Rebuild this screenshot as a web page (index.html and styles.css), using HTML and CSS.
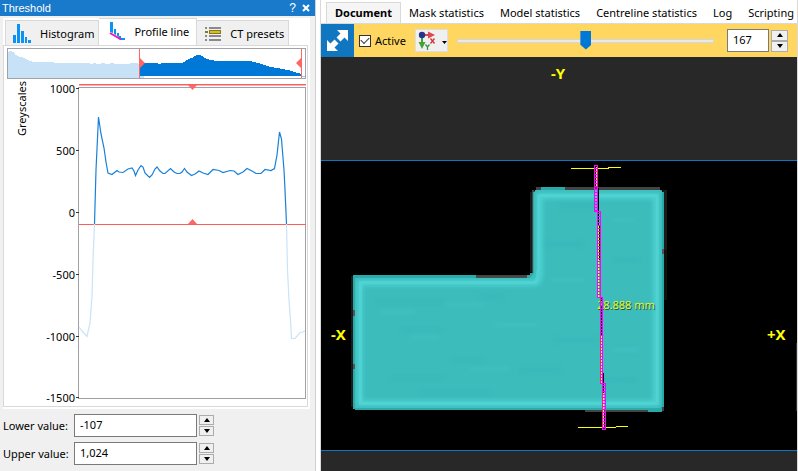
FILE: index.html
```html
<!DOCTYPE html>
<html lang="en">
<head>
<meta charset="utf-8">
<title>Threshold</title>
<link rel="stylesheet" href="styles.css">
</head>
<body>
<aside class="dock">
  <header class="titlebar">
    <h1 class="title">Threshold</h1>
    <button class="title-btn" aria-label="Help">?</button>
    <button class="title-btn" aria-label="Close">
      <svg width="8" height="8" viewBox="0 0 8 8"><path d="M1 1L7 7M7 1L1 7" stroke="#fff" stroke-width="2"/></svg>
    </button>
  </header>

  <div class="dock-body">
    <div class="tabs" role="tablist">
      <button class="tab" role="tab">
        <svg width="20" height="20" viewBox="0 0 20 20"><path fill="#0a93f5" d="M0 11h3v8H0zM4 0h3v19H4zM8 7h3v12H8zM12 13h2v6h-2zM15 16h3v3h-3z"/></svg>
        Histogram
      </button>
      <button class="tab tab-active" role="tab" aria-selected="true">
        <svg width="20" height="20" viewBox="0 0 20 20"><path fill="#0a93f5" d="M3 0h3v11l-3-1zM7 7h2v6l-2-1zM10 11h2v4l-2-1zM12 14h2v4l-2-1zM14 16h4v2h-4z"/><path d="M3 11l11 6.500" stroke="#f413b8" stroke-width="2"/></svg>
        Profile line
      </button>
      <button class="tab" role="tab">
        <svg width="18" height="16" viewBox="0 0 18 16"><path fill="#8a8a8a" d="M0 1h2v2H0zM0 9h2v2H0zM0 13h2v2H0zM4 1h12v2H4zM4 9h12v2H4zM4 13h12v2H4z"/><path fill="#897817" d="M0 5h3v2H0zM4 4h12v4H4z"/><path fill="#d5bd2c" d="M5 5h10v2H5z"/></svg>
        CT presets
      </button>
    </div>

    <div class="pane">
      <svg class="plots" viewBox="4 46 303 360" role="img" aria-label="Profile line of greyscales">
        <g shape-rendering="crispEdges">
          <rect x="7.500" y="48.500" width="298" height="30" fill="#fff" stroke="#9fa3a9"/>
          <path fill="#c7e2f7" d="M8 52h1v-1h3v1h2v1h1v2h2v1h2v1h4v1h2v1h2v1h2v1h3v1h22v1h36v1h3v-1h3v1h5v-1h4v1h5v-1h4v1h16v-1h8v1h6v14H8z"/>
          <path fill="#0078d7" d="M139 64h5v-1h14v1h3v-1h22v-1h2v-1h1v-1h2v-1h2v-1h3v-1h1v-1h2v-1h5v1h2v1h1v1h2v1h3v1h5v1h38v1h4v1h4v1h3v1h3v1h3v1h5v1h6v1h5v1h5v1h3v1h3v1h4v1h2v2H139z"/>
          <path fill="#8fc5ee" d="M301 76h4v1h-4z"/>
          <path d="M139.500 49v29M301.500 49v29" fill="none" stroke="#ff6565"/>
        </g>
        <path fill="#ff6565" d="M140 58l5 5-5 5zM301 58l-5 5 5 5z"/>

        <g shape-rendering="crispEdges" fill="none">
          <path d="M78.500 87.500h227v311h-227z" stroke="#a0a0a5"/>
          <path d="M76 88.500h3M76 150.500h3M76 212.500h3M76 274.500h3M76 336.500h3M76 397.500h3" stroke="#333"/>
          <path d="M79 84.500h227M79 224.500h227" stroke="#ff5c5c"/>
          <path d="M79 85.500h227" stroke="#ffb4b4"/>
        </g>
        <path fill="#ff6565" d="M188 85h9l-4.500 5zM188 224h9l-4.500-5z"/>
        <g fill="none" stroke="#c9e3f7" stroke-width="1.200">
          <path d="M79 327L82 331 87 336.500 90 323 92 296 93 260 94.500 224"/>
          <path d="M286.500 224L287.500 270 289 300 290.500 320 291.500 338.500H295L300 332.500 303 332 305 331"/>
        </g>
        <path fill="none" stroke="#1880d8" stroke-width="1.200" d="M94.500 224L96 170 98.500 117 101 134 104 148 106 162 108 173 112 174.500 117 170.500 119 172 123 172.500 128 169 132 168 134 171 135.500 175.500 138 170 141 165.500 143 167 145 173 149.500 177.500 152 175 155 169 157 167 160 171 163 173.500H165L170.500 168.500 174 172 177 173.500H180L182 172 184.500 168.500 187 172 191.500 175.500 195 174 199 171 203 173 208 174.500 213 169.500 219 170.500 223 172.500 230 170.500 234 171 238 174.500 243 172 247 168.500 252 171 256 173.500H261L265 169.500 271 170.500 274.500 168.500 277 155 279.500 132 281.500 139 284 170 285 190 286.500 224"/>
        <g class="axis" text-anchor="end">
          <text x="75" y="93">1000</text>
          <text x="75" y="155">500</text>
          <text x="75" y="217">0</text>
          <text x="75" y="279">-500</text>
          <text x="75" y="341">-1000</text>
          <text x="75" y="402">-1500</text>
        </g>
        <text class="axis" transform="translate(26 136) rotate(-90)">Greyscales</text>
      </svg>
    </div>
  </div>

  <form class="values">
    <label for="lower">Lower value:</label>
    <input class="field" id="lower" type="text" value="-107">
    <span class="spin">
      <button type="button" aria-label="Increase lower value"><svg width="6" height="4" viewBox="0 0 6 4"><path d="M0 4h6L3 0z"/></svg></button>
      <button type="button" aria-label="Decrease lower value"><svg width="6" height="4" viewBox="0 0 6 4"><path d="M0 0h6L3 4z"/></svg></button>
    </span>
    <label for="upper">Upper value:</label>
    <input class="field" id="upper" type="text" value="1,024">
    <span class="spin">
      <button type="button" aria-label="Increase upper value"><svg width="6" height="4" viewBox="0 0 6 4"><path d="M0 4h6L3 0z"/></svg></button>
      <button type="button" aria-label="Decrease upper value"><svg width="6" height="4" viewBox="0 0 6 4"><path d="M0 0h6L3 4z"/></svg></button>
    </span>
  </form>
</aside>

<main class="viewer">
  <nav class="doc-tabs" role="tablist">
    <button class="doc-tab doc-tab-active" role="tab" aria-selected="true">Document</button>
    <button class="doc-tab" role="tab">Mask statistics</button>
    <button class="doc-tab" role="tab">Model statistics</button>
    <button class="doc-tab" role="tab">Centreline statistics</button>
    <button class="doc-tab" role="tab">Log</button>
    <button class="doc-tab" role="tab">Scripting</button>
  </nav>

  <div class="toolbar">
    <button class="expand" aria-label="Expand view">
      <svg width="21" height="21" viewBox="0 0 21 21"><path fill="#fff" d="M10 0H21V11L17.500 7.500 13.500 11.500 9.500 7.500 13.500 3.500zM0 10L3.500 13.500 7.500 9.500 11.500 13.500 7.500 17.500 11 21H0z"/></svg>
    </button>
    <label class="active"><input type="checkbox" checked>Active</label>
    <button class="axes" aria-label="View orientation">
      <svg width="30" height="20" viewBox="0 0 30 20">
        <path d="M5 4v8" stroke="#45a03a" stroke-width="2"/><path fill="#45a03a" d="M1.500 11h7l-3.500 7z"/>
        <path d="M5 4h7" stroke="#e0464d" stroke-width="2"/><path fill="#e0464d" d="M11 .5l7 3.500-7 3.500z"/>
        <circle cx="5" cy="4" r="3.200" fill="#26348c"/>
        <path d="M13.500 7.500l4 5M17.500 7.500l-4 5" stroke="#d9303c" stroke-width="1.300"/>
        <path d="M8.500 13.500l2 2.500 2-2.500M10.500 16v3" fill="none" stroke="#35973a" stroke-width="1.300"/>
        <path d="M25 10h5l-2.500 3z"/>
      </svg>
    </button>
    <input class="slice" type="range" min="0" max="333" value="167" aria-label="Slice">
    <input class="field slice-value" type="text" value="167" aria-label="Slice number">
    <span class="spin spin-large">
      <button type="button" aria-label="Next slice"><svg width="6" height="4" viewBox="0 0 6 4"><path d="M0 4h6L3 0z"/></svg></button>
      <button type="button" aria-label="Previous slice"><svg width="6" height="4" viewBox="0 0 6 4"><path d="M0 0h6L3 4z"/></svg></button>
    </span>
  </div>

  <div class="view">
    <svg class="scan" viewBox="321 57 476 414" role="img" aria-label="Slice view">
      <defs>
        <path id="part" d="M354 275H527V273H532V190H535V188H560V190H661V192H662V409H648V410H354z"/>
        <clipPath id="inside"><use href="#part"/></clipPath>
        <filter id="soft" x="-10%" y="-10%" width="120%" height="120%"><feGaussianBlur stdDeviation="2"/></filter>
      </defs>
      <rect x="321" y="160" width="476" height="291" fill="#000"/>
      <g shape-rendering="crispEdges">
        <path d="M321 160.500h476M321 450.500h476" stroke="#0f76c4"/>
        <path d="M796.500 343v68" stroke="#333"/>
        <path fill="#1b1b1b" d="M351 276h3v131h-3zM530 192h3v80h-3zM663 190h4v60h-4z"/>
        <path fill="#111" d="M663 250h4v50h-4z"/>
        <path fill="#444" d="M476 275h51v3h-51zM532 190h2v84h-2zM536 187h124v3H536zM662 192h2v219h-2zM585 410h63v2h-63z"/>
        <path fill="#2aa9a9" d="M353 275h123v3h51v-3h3v-2h3V192h2v-2h6v-3h24v3h97v2h2v215h-2v5h-14v-2H355v-1h-2z"/>
      </g>
      <path fill="#3dbcbc" d="M355 278H530L534 273V192L536 190H660L662 192V406L660 408H355z"/>
      <g clip-path="url(#inside)">
        <path d="M360 283H536Q540 280 540 273V196H656V403H360z" fill="none" stroke="#57dede" stroke-width="6" opacity=".6" filter="url(#soft)"/>
        <g fill="none" shape-rendering="crispEdges">
          <path d="M360 282H535Q538 279 538 271V195H657V403H360z" stroke="#63e6e3" stroke-width="3" opacity=".25"/>
        </g>
        <g filter="url(#soft)" stroke="#30b2b2" stroke-width="3" opacity=".45">
          <path d="M375 302h70M400 330h42M390 378h55M450 360h35M480 297h24M545 244h38M560 206h35M555 340h42M605 380h30M520 370h40M615 260h25M420 392h70"/>
        </g>
        <g filter="url(#soft)" stroke="#4bcaca" stroke-width="3" opacity=".4">
          <path d="M380 312h35M410 337h30M470 369h40M495 325h45M550 280h35M610 220h25M610 350h30M445 305h40"/>
        </g>
      </g>
      <g shape-rendering="crispEdges" fill="none">
        <path d="M353 310h2v6h-2zM353 364h2v5h-2zM662 249h2v5h-2z" fill="#555"/>
        <path d="M571 168.500H609M608 167.500H621M578 427.500H616M616 426.500H628" stroke="#ff0"/>
        <path d="M596.500 167V187M598.500 225V297M601.500 335V383M603.500 393V427" stroke="#ff0"/>
        <path d="M598.500 188V225M599.500 225V260M601.500 297V335M603.500 373V393" stroke="#000"/>
      </g>
      <text class="measure-shadow" x="598" y="310">28.888 mm</text>
      <text class="measure" x="597" y="309">28.888 mm</text>
      <g fill="none" stroke="#f0f" shape-rendering="crispEdges">
        <path d="M594.500 165.500h3v46h-3zM597.500 211.500h3v86h-3zM600.500 297.500h2v86h-2zM602.500 383.500h3v46h-3z"/>
        <path d="M596 168v43M599 213v84M601.500 299v84M604 385v44" stroke-width="2" stroke-dasharray="1 2"/>
      </g>
      <g class="direction">
        <text x="551" y="79">-Y</text>
        <text x="331" y="340">-X</text>
        <text x="767" y="340">+X</text>
      </g>
    </svg>
  </div>
</main>
</body>
</html>
```

FILE: styles.css
```css
* {
  box-sizing: border-box;
}

body {
  margin: 0;
  min-height: 100vh;
  display: flex;
  gap: 4px;
  overflow: hidden;
  background: #fff;
  color: #000;
  font: 11px/16px "Noto Sans", "Open Sans", sans-serif;
}

button,
input {
  margin: 0;
  padding: 0;
  font: inherit;
  color: inherit;
}

button {
  border: 0;
  background: none;
}

svg {
  display: block;
  flex: none;
}

.dock {
  flex: none;
  width: 316px;
  border-right: 1px solid #d0d0d0;
  background: #f0f0f0;
}

.titlebar {
  display: flex;
  align-items: center;
  gap: 6px;
  height: 16px;
  padding: 0 5px 0 2px;
  background: #1979ca;
  color: #fff;
  font-family: "Liberation Sans", sans-serif;
  line-height: 14px;
}

.title {
  flex: 1;
  margin: 0;
  font-size: 11px;
  font-weight: 400;
}

.title-btn {
  font-size: 12px;
  line-height: 12px;
}

.dock-body {
  margin: 2px 5px 0 3px;
  padding-right: 2px;
  padding-bottom: 2px;
  background: #fff;
}

.tabs {
  display: flex;
  align-items: flex-end;
  height: 27px;
  padding-left: 2px;
}

.tab {
  display: flex;
  align-items: center;
  gap: 7px;
  height: 25px;
  padding: 2px 4px 0 7px;
  border: 1px solid #d9d9d9;
  border-bottom: 0;
  background: #f0f0f0;
  white-space: nowrap;
}

.tab + .tab {
  border-left: 0;
  padding-left: 8px;
}

.tab-active {
  height: 27px;
  padding: 0 7px 1px 8px;
  background: #fff;
}

.pane {
  border: 1px solid #d9d9d9;
}

.plots {
  width: 100%;
}

.axis {
  font-size: 11px;
}

.values {
  display: grid;
  grid-template-columns: 69px 123px auto;
  justify-content: start;
  align-items: center;
  gap: 5px 2px;
  padding: 5px 3px;
  white-space: nowrap;
}

.field {
  width: 100%;
  height: 23px;
  padding: 0 5px 2px;
  border: 1px solid #7a7a7a;
  border-radius: 0;
  background: #fff;
}

.spin {
  display: grid;
  gap: 1px;
  width: 15px;
}

.spin button {
  display: grid;
  place-items: center;
  height: 10px;
  border: 1px solid #acacac;
  background: #f0f0f0;
}

.viewer {
  flex: 1;
  min-width: 0;
  display: flex;
  flex-direction: column;
  border-left: 1px solid #d9d9d9;
  border-right: 1px solid #d9d9d9;
}

.doc-tabs {
  display: flex;
  height: 24px;
  padding: 2px 0 0 5px;
  border-bottom: 1px solid #d9d9d9;
  overflow: hidden;
}

.doc-tab {
  flex: none;
  padding: 0 8px;
  white-space: nowrap;
}

.doc-tab-active {
  border: 1px solid #d9d9d9;
  border-bottom: 0;
  background: #f5f5f5;
  font-weight: 700;
}

.toolbar {
  display: flex;
  align-items: center;
  height: 33px;
  padding-right: 9px;
  background: #ffd660;
}

.expand {
  display: grid;
  place-items: center;
  width: 33px;
  height: 33px;
  background: #0f76bf;
}

.active {
  display: flex;
  align-items: center;
  gap: 4px;
  width: 61px;
  padding-left: 5px;
}

.active input {
  appearance: none;
  width: 12px;
  height: 12px;
  border: 1px solid #333;
  background: #fff;
  display: grid;
  place-items: center;
}

.active input:checked::before {
  content: "";
  width: 7px;
  height: 4px;
  margin-bottom: 2px;
  border: solid #333;
  border-width: 0 0 1px 1px;
  transform: rotate(-45deg);
}

.axes {
  width: 33px;
  height: 23px;
  padding: 1px;
  border: 1px solid #ddd;
  background: #f0f0f0;
}

.slice {
  appearance: none;
  flex: 1;
  min-width: 0;
  height: 20px;
  margin: 0 13px 0 9px;
  background: none;
}

.slice::-webkit-slider-runnable-track {
  height: 4px;
  border: 1px solid #d6d6d6;
  background: #e7eaea;
}

.slice::-webkit-slider-thumb {
  appearance: none;
  width: 11px;
  height: 19px;
  margin-top: -9px;
  background: #0078d7;
  clip-path: polygon(0 0, 100% 0, 100% 75%, 50% 100%, 0 75%);
}

.slice-value {
  width: 42px;
  margin-right: 2px;
}

.spin-large {
  gap: 0;
  width: 17px;
}

.spin-large button {
  height: 11px;
}

.view {
  flex: 1;
  display: flex;
  min-height: 0;
  background: #282828;
}

.scan {
  flex: 1;
  min-width: 0;
  width: 100%;
}

.direction {
  fill: #ff0;
  font-size: 15px;
  font-weight: 700;
}

.measure,
.measure-shadow {
  font-size: 11px;
}

.measure {
  fill: #e8f51c;
}

.measure-shadow {
  fill: #165555;
}
```
